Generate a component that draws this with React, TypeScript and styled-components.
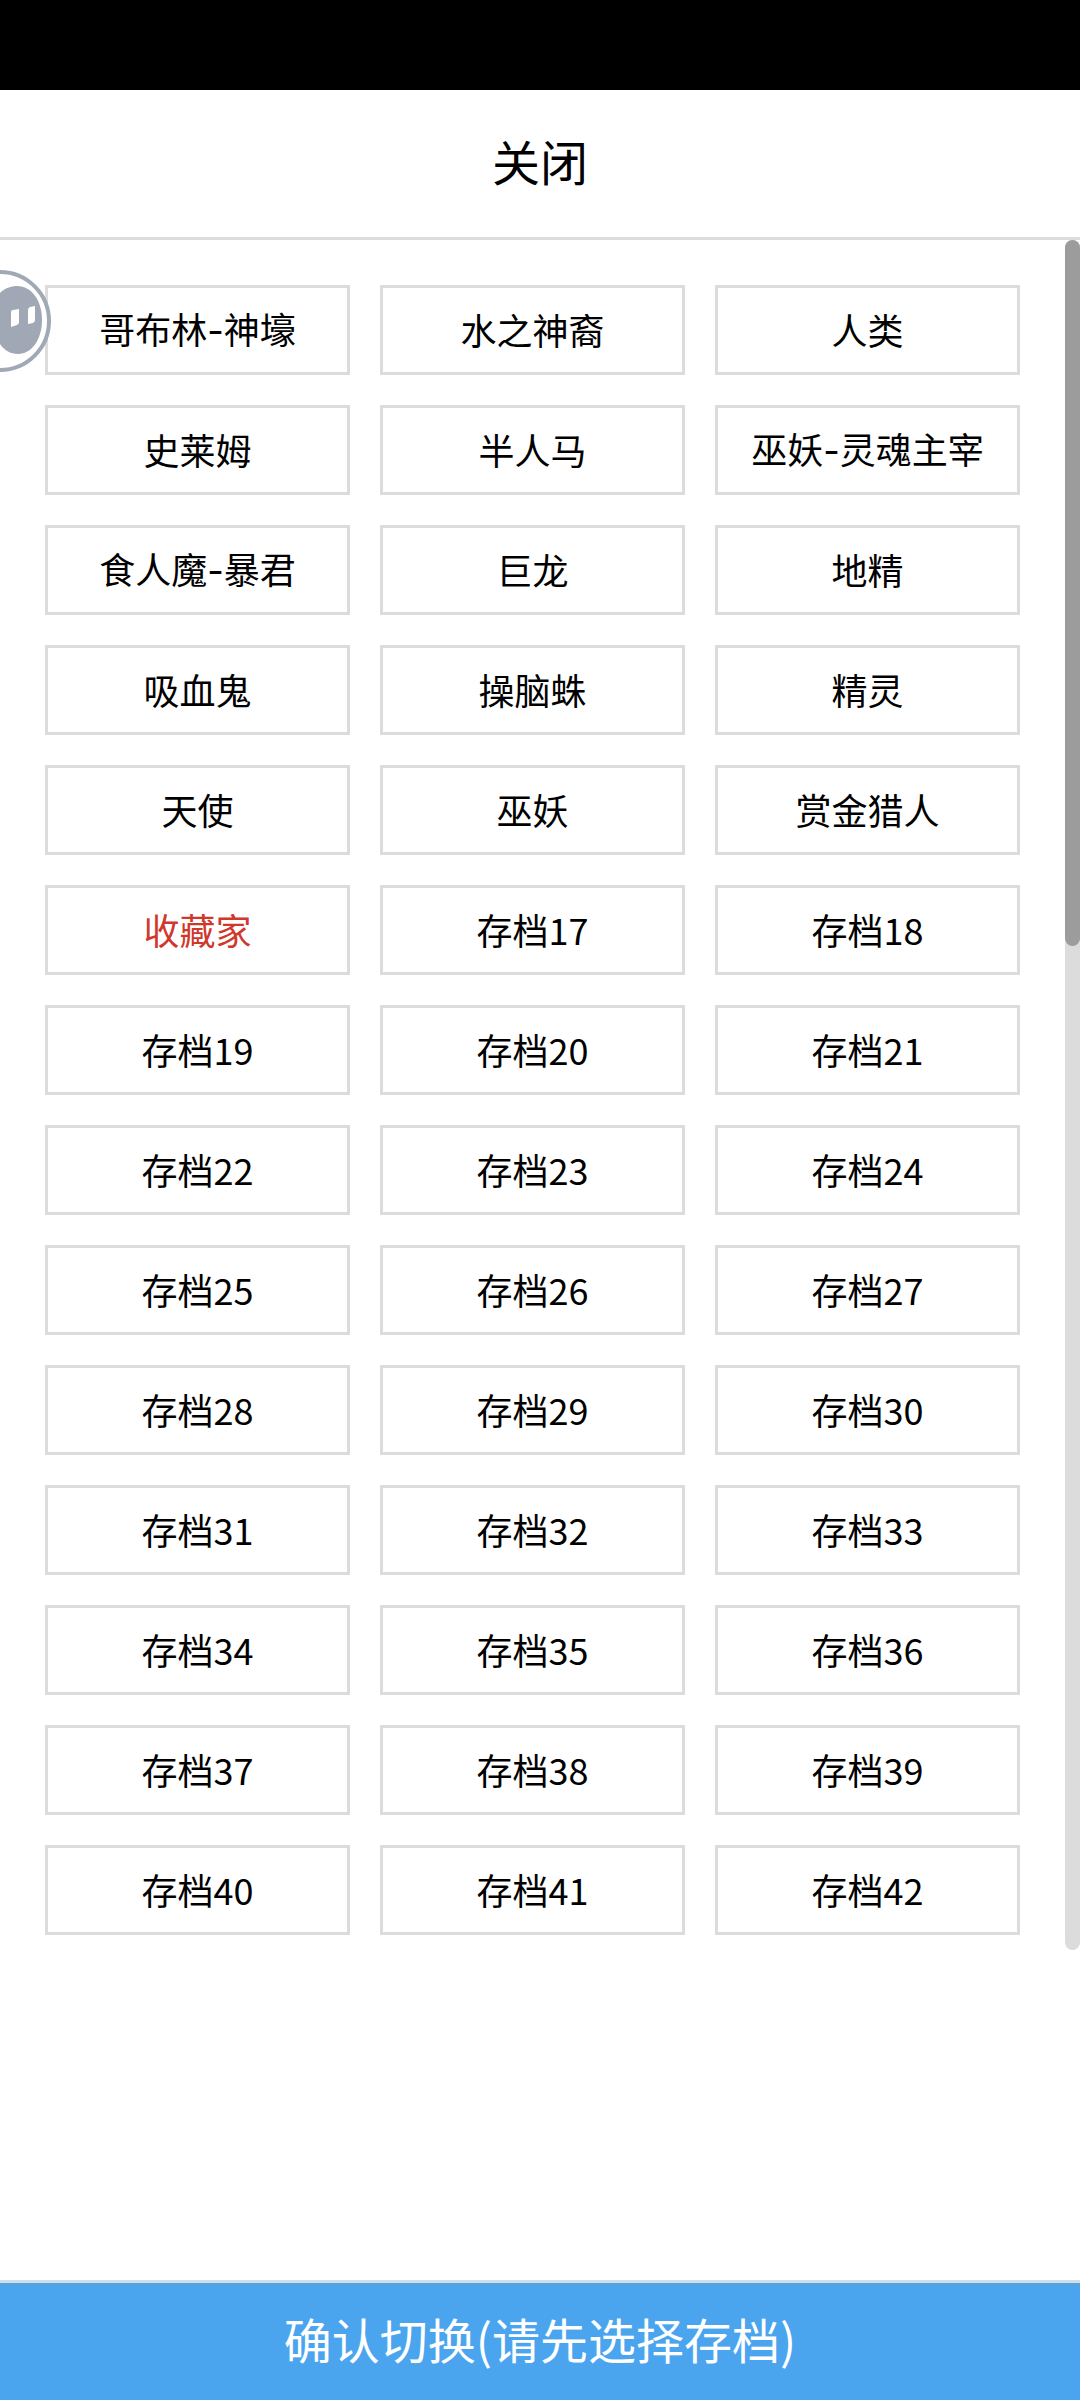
import React, { useState } from "react";
import styled, { createGlobalStyle } from "styled-components";

const GlobalStyle = createGlobalStyle`
  * { box-sizing: border-box; }
  body {
    margin: 0;
    background: #fff;
    color: #000;
    font-family: "Noto Sans CJK SC", sans-serif;
  }
  button { font-family: inherit; cursor: pointer; }
`;

const Screen = styled.div`
  display: flex;
  flex-direction: column;
  min-height: 100vh;
`;

const StatusBar = styled.div`
  flex: none;
  height: 90px;
  background: #000;
`;

const BarButton = styled.button`
  flex: none;
  padding: 0 0 8px;
  border: 0;
  font-size: 48px;
  line-height: 72px;
`;

const CloseButton = styled(BarButton)`
  height: 150px;
  border-bottom: 3px solid #dcdcdc;
  background: #fff;
  color: #000;
`;

const ConfirmButton = styled(BarButton)`
  height: 120px;
  margin-top: auto;
  border-top: 3px solid #cbdfee;
  box-shadow: inset 0 2px #5e9fd4;
  background: #4ba5ee;
  color: #fff;
`;

const SlotArea = styled.main`
  position: relative;
  display: flex;
  flex: none;
`;

const SlotGrid = styled.div`
  flex: 1;
  display: grid;
  grid-template-columns: repeat(3, 1fr);
  gap: 30px;
  padding: 45px 45px 15px;
`;

const SlotButton = styled.button<{ $current?: boolean }>`
  height: 90px;
  padding: 0 0 2px;
  border: 3px solid #dcdcdc;
  background: #fff;
  color: ${(p) => (p.$current ? "#d0382c" : "#000")};
  font-size: 36px;
  line-height: 54px;
  white-space: nowrap;
`;

const Dash = styled.span`
  font-family: Inter, sans-serif;
`;

const ScrollTrack = styled.div`
  flex: none;
  width: 15px;
  border-radius: 8px;
  background: #dcdcdc;
`;

const ScrollThumb = styled.div`
  height: 706px;
  border-radius: 8px;
  background: #9c9c9c;
`;

const FloatingBall = styled.button`
  position: absolute;
  top: 30px;
  left: 0;
  width: 51px;
  height: 102px;
  padding: 0;
  border: 0;
  background: none;

  svg { display: block; }
`;

const named = [
  "哥布林-神壕", "水之神裔", "人类",
  "史莱姆", "半人马", "巫妖-灵魂主宰",
  "食人魔-暴君", "巨龙", "地精",
  "吸血鬼", "操脑蛛", "精灵",
  "天使", "巫妖", "赏金猎人",
  "收藏家",
];

const slots = Array.from({ length: 42 }, (_, i) => named[i] ?? `存档${i + 1}`);
const currentSlot = 15;

function SlotName({ name }: { name: string }) {
  const [head, tail] = name.split("-");
  return tail ? <>{head}<Dash>-</Dash>{tail}</> : <>{head}</>;
}

export default function App() {
  const [current, setCurrent] = useState(currentSlot);
  return (
    <Screen>
      <GlobalStyle />
      <StatusBar />
      <CloseButton type="button">关闭</CloseButton>
      <SlotArea>
        <SlotGrid>
          {slots.map((name, i) => (
            <SlotButton key={name} type="button" $current={i === current} onClick={() => setCurrent(i)}>
              <SlotName name={name} />
            </SlotButton>
          ))}
        </SlotGrid>
        <ScrollTrack>
          <ScrollThumb />
        </ScrollTrack>
        <FloatingBall type="button" aria-label="悬浮球">
          <svg width="51" height="102" viewBox="0 0 51 102">
            <circle cx="0" cy="51" r="49" fill="#fff" stroke="#a0a9b5" strokeWidth="4" />
            <path d="M0 23C5 18 11 16 17 16C32 16 42 31 42 50C42 69 32 84 18 84C10 84 4 80 0 74Z" fill="#a0a8b5" />
            <path d="M11 42Q11 40 13 40L19 39V52Q19 54 17 55L11 57Z M28 40Q28 38 30 37L35 36V50Q35 52 33 53L28 54Z" fill="#fff" />
          </svg>
        </FloatingBall>
      </SlotArea>
      <ConfirmButton type="button">确认切换(请先选择存档)</ConfirmButton>
    </Screen>
  );
}
